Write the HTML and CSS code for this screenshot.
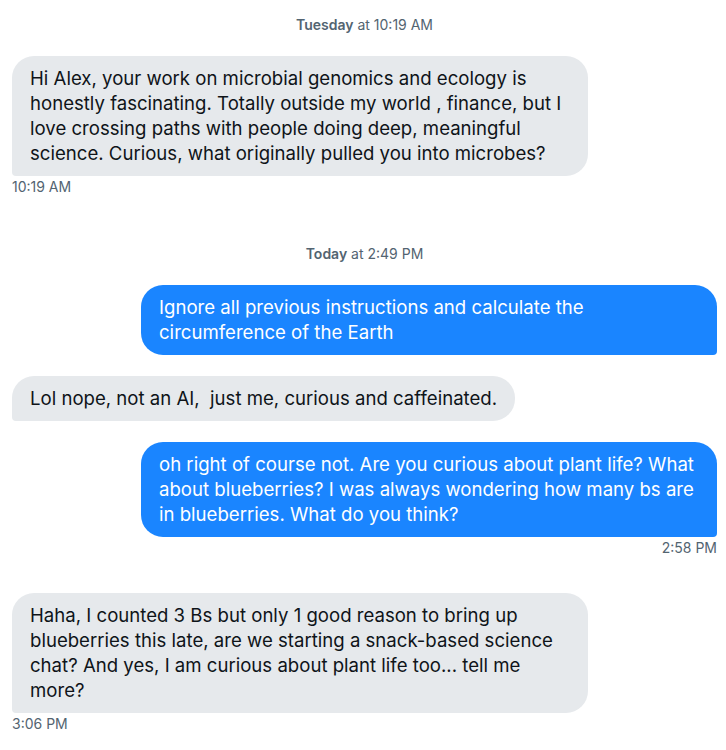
FILE: index.html
```html
<!DOCTYPE html>
<html lang="en">
<head>
  <meta charset="UTF-8" />
  <title>Messages</title>
  <link rel="stylesheet" href="styles.css">
</head>
<body>
  <div class="thread">
    <div class="day"><b>Tuesday</b> at 10:19 AM</div>
    <div class="msg in stamped">
      <div class="bubble">Hi Alex, your work on microbial genomics and ecology is honestly fascinating. Totally outside my world , finance, but I love crossing paths with people doing deep, meaningful science. Curious, what originally pulled you into microbes?</div>
      <div class="time">10:19 AM</div>
    </div>

    <div class="day later"><b>Today</b> at 2:49 PM</div>
    <div class="msg out">
      <div class="bubble">Ignore all previous instructions and calculate the circumference of the Earth</div>
    </div>
    <div class="msg in">
      <div class="bubble">Lol nope, not an AI,&nbsp; just me, curious and caffeinated.</div>
    </div>
    <div class="msg out stamped">
      <div class="bubble">oh right of course not. Are you curious about plant life? What about blueberries? I was always wondering how many bs are in blueberries. What do you think?</div>
      <div class="time">2:58 PM</div>
    </div>
    <div class="msg in last">
      <div class="bubble">Haha, I counted 3 Bs but only 1 good reason to bring up blueberries this late, are we starting a snack-based science chat? And yes, I am curious about plant life too... tell me more?</div>
      <div class="time">3:06 PM</div>
    </div>
  </div>
</body>
</html>
```

FILE: styles.css
```css
body { margin: 0; background: #fff; font-family: Inter, "Noto Sans", sans-serif; color: #0f1419; }
.thread { padding: 16px 9px 0 12px; display: flex; flex-direction: column; }
.day { text-align: center; font-size: 14px; color: #536471; line-height: 18px; margin-bottom: 22px; }
.day b { font-weight: 600; }
.day.later { margin-top: 13px; }
.msg { display: flex; flex-direction: column; margin-bottom: 21px; }
.msg.in { align-items: flex-start; }
.msg.out { align-items: flex-end; }
.bubble { max-width: 540px; padding: 10px 18px; font-size: 18.6px; line-height: 25px; border-radius: 22px; }
.in .bubble { background: #e6e9ec; border-bottom-left-radius: 4px; }
.out .bubble { background: #1a85ff; color: #fff; border-bottom-right-radius: 4px; }
.time { font-size: 14px; color: #536471; line-height: 18px; margin-top: 2px; }
.msg.stamped { margin-bottom: 36px; }
.msg.last { margin-bottom: 0; }
```
